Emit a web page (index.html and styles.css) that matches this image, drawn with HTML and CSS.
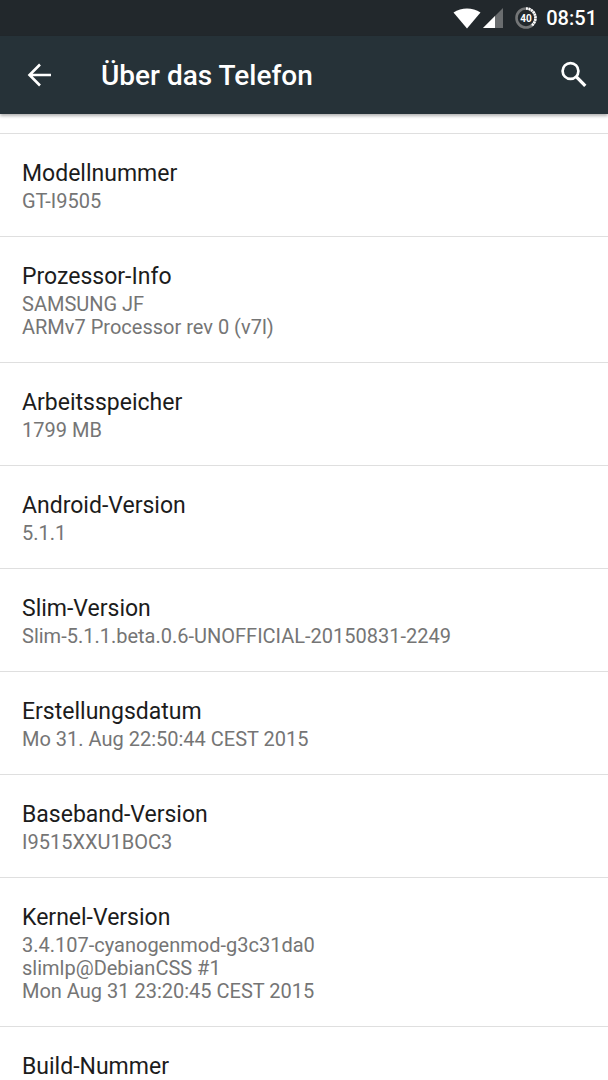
FILE: index.html
```html
<!DOCTYPE html>
<html lang="de">
<head>
<meta charset="utf-8">
<meta name="viewport" content="width=device-width, initial-scale=1">
<title>Über das Telefon</title>
<link rel="stylesheet" href="styles.css">
</head>
<body>
<div class="screen">
  <div class="status-bar">
    <svg class="wifi" viewBox="0 0 28 21" aria-hidden="true"><path d="M0.5 4.5C8.500-.8 19.500-.8 27.500 4.500L14 20.500Z" fill="#fff"/></svg>
    <svg class="signal" viewBox="0 0 20 20" aria-hidden="true"><path d="M0 20L20 0V20Z" fill="#6a6d6f"/><path d="M0 20L12 8V20Z" fill="#fff"/></svg>
    <svg class="battery" viewBox="0 0 22 22" aria-hidden="true">
      <circle cx="11" cy="11" r="9.500" fill="none" stroke="#747677" stroke-width="2.600"/>
      <path d="M11 1.500A9.500 9.500 0 0 1 16.500 18.700" fill="none" stroke="#fff" stroke-width="2.600" stroke-dasharray="1.900 0.700"/>
      <text class="battery-level" x="11" y="15" text-anchor="middle">40</text>
    </svg>
    <time class="clock">08:51</time>
  </div>
  <header class="app-bar">
    <button class="icon-button" type="button" aria-label="Zurück">
      <svg class="icon" viewBox="0 0 32 32" aria-hidden="true"><path d="M27 16H6M16 5.500L5.500 16L16 26.500" fill="none" stroke="#fff" stroke-width="2.600"/></svg>
    </button>
    <h1 class="app-title">Über das Telefon</h1>
    <button class="icon-button" type="button" aria-label="Suchen">
      <svg class="icon" viewBox="0 0 32 32" aria-hidden="true"><circle cx="12.500" cy="12" r="7.900" fill="none" stroke="#fff" stroke-width="2.700"/><path d="M18.200 17.700L27.300 26.800" stroke="#fff" stroke-width="3.300"/></svg>
    </button>
  </header>
  <main>
    <dl class="info-list">
      <div class="info-item"><dt>Modellnummer</dt><dd>GT-I9505</dd></div>
      <div class="info-item"><dt>Prozessor-Info</dt><dd>SAMSUNG JF<br>ARMv7 Processor rev 0 (v7l)</dd></div>
      <div class="info-item"><dt>Arbeitsspeicher</dt><dd>1799 MB</dd></div>
      <div class="info-item"><dt>Android-Version</dt><dd>5.1.1</dd></div>
      <div class="info-item"><dt>Slim-Version</dt><dd>Slim-5.1.1.beta.0.6-UNOFFICIAL-20150831-2249</dd></div>
      <div class="info-item"><dt>Erstellungsdatum</dt><dd>Mo 31. Aug 22:50:44 CEST 2015</dd></div>
      <div class="info-item"><dt>Baseband-Version</dt><dd>I9515XXU1BOC3</dd></div>
      <div class="info-item"><dt>Kernel-Version</dt><dd>3.4.107-cyanogenmod-g3c31da0<br>slimlp@DebianCSS #1<br>Mon Aug 31 23:20:45 CEST 2015</dd></div>
      <div class="info-item"><dt>Build-Nummer</dt></div>
    </dl>
  </main>
</div>
</body>
</html>
```
FILE: styles.css
```css
* {
  box-sizing: border-box;
}

body {
  margin: 0;
  background: #fff;
  color: #1c1c1c;
  font-family: Roboto, "Liberation Sans", sans-serif;
}

.screen {
  height: 100vh;
  overflow: hidden;
}

.status-bar {
  display: flex;
  align-items: center;
  justify-content: flex-end;
  height: 36px;
  padding: 0 11px;
  background: #22282c;
  color: #fff;
}

.wifi {
  width: 28px;
  height: 21px;
}

.signal {
  width: 20px;
  height: 20px;
  margin: 0 12px 0 2px;
}

.battery {
  width: 22px;
  height: 22px;
}

.battery-level {
  fill: #fff;
  font-size: 10px;
  font-weight: 700;
}

.clock {
  margin-left: 9px;
  font-size: 20px;
  font-weight: 500;
  line-height: 24px;
}

.app-bar {
  position: relative;
  display: flex;
  align-items: center;
  height: 78px;
  padding: 0 18px 0 24px;
  background: #263238;
  color: #fff;
  box-shadow: 0 2px 3px rgba(0, 0, 0, 0.3);
}

.icon-button {
  display: flex;
  padding: 0;
  border: 0;
  background: none;
}

.icon {
  width: 32px;
  height: 32px;
}

.app-title {
  flex: 1;
  margin: 0;
  padding: 2px 0 0 45px;
  font-size: 28px;
  font-weight: 500;
  line-height: 36px;
}

.info-list {
  margin: 0;
  padding-top: 19px;
}

.info-item {
  padding: 24px 22px 23px;
  border-top: 1px solid #dfdfdf;
}

.info-item dt {
  font-size: 23px;
  line-height: 32px;
}

.info-item dd {
  margin: 0;
  color: #757575;
  font-size: 20px;
  line-height: 23px;
}
```
